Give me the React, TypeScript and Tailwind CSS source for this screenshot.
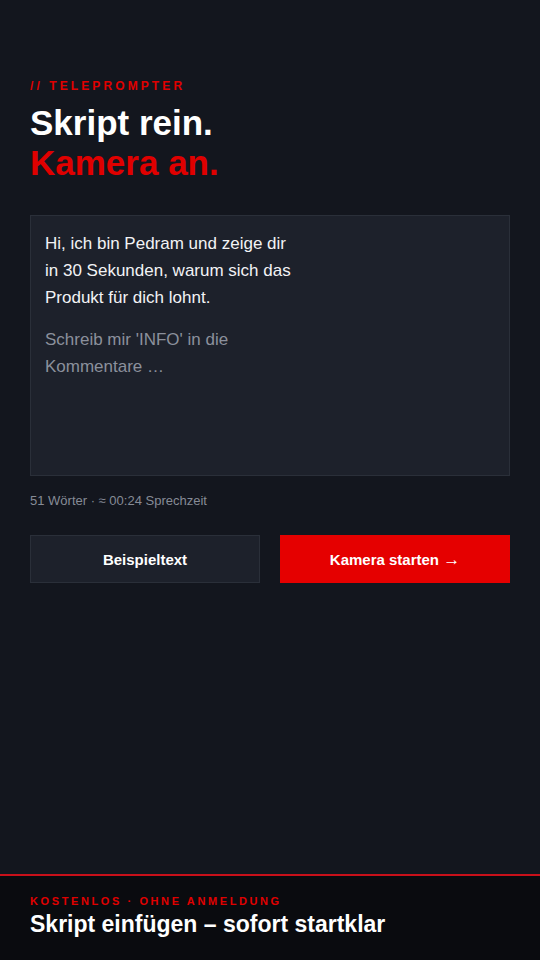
import React from "react";

export default function App() {
  const font = { fontFamily: '"Liberation Sans", Arial, sans-serif' };
  return (
    <div className="w-[540px] h-[960px] bg-[#13161e] flex flex-col" style={font}>
      <div className="flex-1 flex flex-col px-[30px] pt-[78px]">
        <div className="text-[12px] leading-[16px] font-bold tracking-[3.1px] text-[#e00000]">// TELEPROMPTER</div>
        <h1 className="mt-[9px] text-[35px] leading-[40px] font-bold text-white">
          Skript rein.
          <br />
          <span className="text-[#e00000]">Kamera an.</span>
        </h1>
        <div className="mt-[32px] h-[261px] bg-[#1d212b] border border-[#2a2f39] px-[14px] pt-[14px] text-[17px] leading-[27px]">
          <p className="text-[#f2f3f5]">
            Hi, ich bin Pedram und zeige dir
            <br />
            in 30 Sekunden, warum sich das
            <br />
            Produkt für dich lohnt.
          </p>
          <p className="mt-[15px] text-[#8b909c]">
            Schreib mir 'INFO' in die
            <br />
            Kommentare …
          </p>
        </div>
        <div className="mt-[16px] text-[13px] leading-[18px] text-[#868b96]">51 Wörter · ≈ 00:24 Sprechzeit</div>
        <div className="mt-[25px] grid grid-cols-2 gap-[20px]">
          <button className="h-[48px] pt-[2px] bg-[#1d212b] border border-[#2a2f39] text-white text-[15px] font-bold">Beispieltext</button>
          <button className="h-[48px] pt-[2px] bg-[#e50000] text-white text-[15px] font-bold">
            Kamera starten <span className="text-[17px] leading-[15px]">→</span>
          </button>
        </div>
      </div>
      <div className="h-[86px] border-t-2 border-[#c8101a] bg-[#0a0b0f] px-[30px] pt-[18px]">
        <div className="text-[11px] leading-[14px] font-bold tracking-[2.6px] text-[#e00000]">KOSTENLOS · OHNE ANMELDUNG</div>
        <div className="mt-[2px] text-[23px] leading-[28px] font-bold text-white">Skript einfügen – sofort startklar</div>
      </div>
    </div>
  );
}
